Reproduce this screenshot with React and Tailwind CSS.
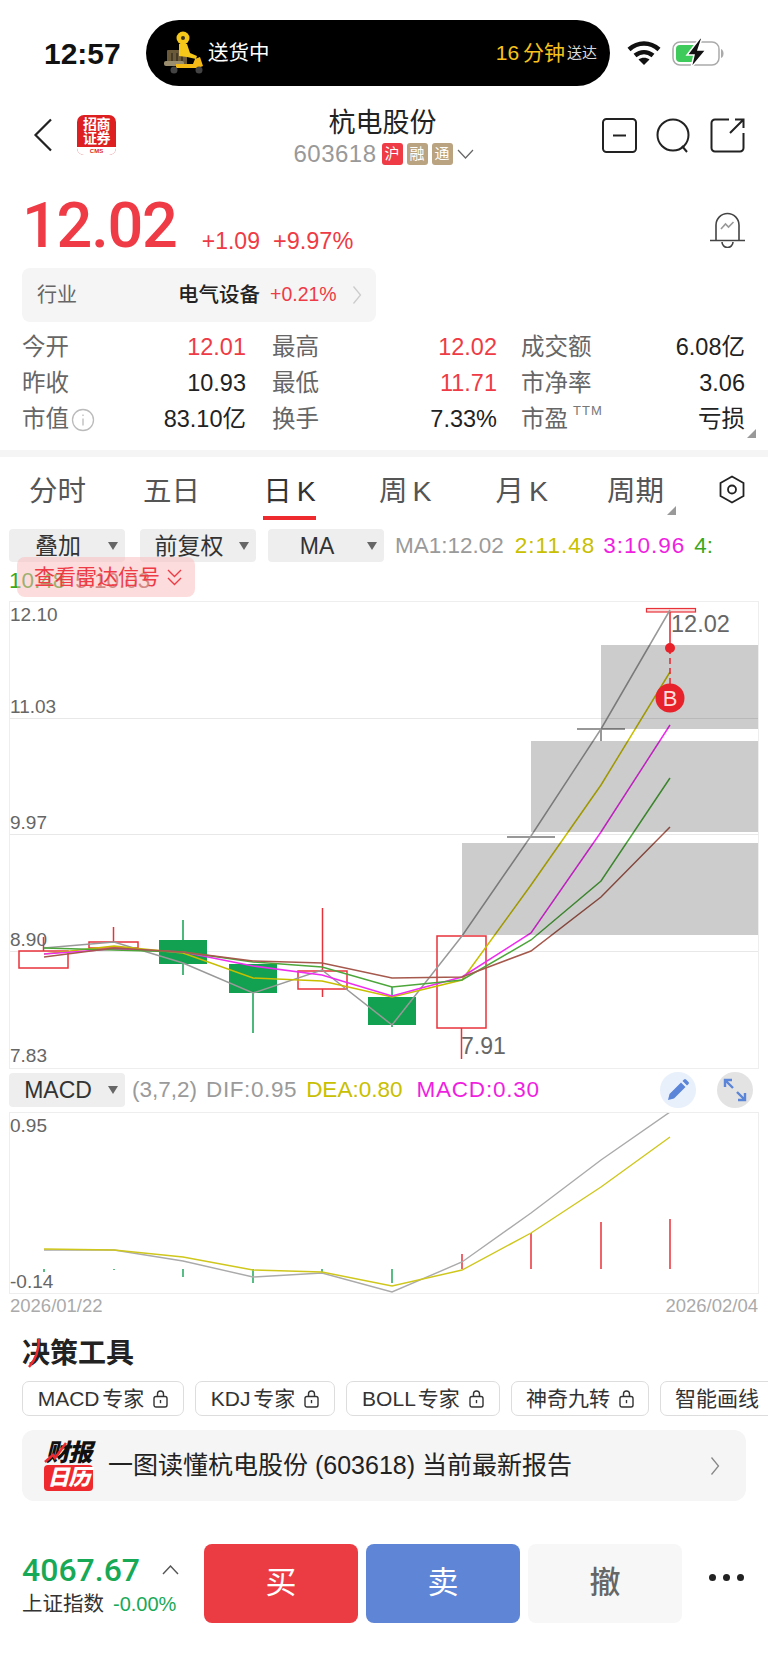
import React from 'react';

const X = [44, 114, 183, 253, 322, 392, 462, 531, 601, 670];

const toPoints = (ys) => ys.map((y, i) => `${X[i]},${y}`).join(' ');

const MA_LINES = [
  { color: '#999999', ys: [948, 942, 963, 993, 970, 1025, 936, 836, 729, 610] },
  { color: '#C8BE00', ys: [954, 946, 953, 978, 981, 997, 980, 885, 785, 672] },
  { color: '#EE2BEE', ys: [954, 949, 952, 966, 975, 996, 977, 933, 832, 725] },
  { color: '#4CA63A', ys: [948, 950, 952, 962, 967, 987, 980, 940, 881, 778] },
  { color: '#A5594C', ys: [957, 948, 952, 961, 963, 978, 977, 951, 897, 827] },
];

const CANDLES = [
  { up: true, x: 19, w: 49, top: 951, bottom: 968, hi: 937, lo: 968 },
  { up: true, x: 89, w: 49, top: 942, bottom: 948, hi: 927, lo: 948 },
  { up: false, x: 159, w: 48, top: 940, bottom: 964, hi: 920, lo: 975 },
  { up: false, x: 229, w: 48, top: 964, bottom: 993, hi: 964, lo: 1033 },
  { up: true, x: 298, w: 49, top: 971, bottom: 989, hi: 908, lo: 997 },
  { up: false, x: 368, w: 48, top: 997, bottom: 1025, hi: 987, lo: 1027 },
  { up: true, x: 437, w: 49, top: 936, bottom: 1028, hi: 936, lo: 1059 },
];

const MACD_BARS = [
  [1269, 1272, '#12A150'], [1269, 1270, '#12A150'], [1269, 1277, '#12A150'], [1269, 1283, '#12A150'], [1269, 1272, '#12A150'],
  [1269, 1283, '#12A150'], [1254, 1269, '#E8222A'], [1233, 1269, '#E8222A'], [1222, 1269, '#E8222A'], [1219, 1269, '#E8222A'],
];

const STATS = [
  ['今开', '12.01', true, '最高', '12.02', true, '成交额', '6.08亿', false],
  ['昨收', '10.93', false, '最低', '11.71', true, '市净率', '3.06', false],
  ['市值', '83.10亿', false, '换手', '7.33%', false, '市盈', '亏损', false],
];

const TOOLS = [
  ['MACD 专家', 'w-[162px]'],
  ['KDJ 专家', 'w-[140px]'],
  ['BOLL 专家', 'w-[154px]'],
  ['神奇九转', 'w-[138px]'],
  ['智能画线', 'w-[138px]'],
];

const Caret = () => (
  <span className="w-0 h-0 border-x-[5px] border-x-transparent border-t-[8px] border-t-[#666666]" />
);

const Select = ({ label, className }) => (
  <div className={`h-[33px] bg-[#EEEEEE] rounded-[4px] flex items-center shrink-0 relative ${className}`}>
    <span className="text-[23px] text-[#333333] w-full text-center pr-[18px]">{label}</span>
    <span className="absolute right-[7px] top-[13px] flex"><Caret /></span>
  </div>
);

const Chevron = ({ className, color = '#BBBBBB' }) => (
  <svg className={className} viewBox="0 0 10 20" fill="none" stroke={color} strokeWidth="1.3">
    <path d="M1.5 1.5 8.5 10 1.5 18.5" />
  </svg>
);

const LockIcon = () => (
  <svg className="w-[15px] h-[18px] shrink-0" viewBox="0 0 15 18" fill="none" stroke="#333333" strokeWidth="1.4">
    <rect x="1" y="6.5" width="13" height="10.5" rx="2" />
    <path d="M4.5 6.5V4a3 3 0 0 1 6 0v2.500" />
    <path d="M7.500 10v3.200" />
  </svg>
);

const Rider = () => (
  <svg className="w-[42px] h-[44px] shrink-0" viewBox="0 0 42 44">
    <rect x="3" y="19" width="20" height="15" rx="1" fill="#6B5A3A" />
    <path d="M8 22v8M13 22v8M18 22v8" stroke="#3A3020" strokeWidth="1.500" />
    <rect x="0" y="30" width="20" height="5" rx="2" fill="#9A8E6E" />
    <circle cx="19" cy="7" r="6.500" fill="#F5C71A" />
    <circle cx="19" cy="7" r="2" fill="#3A3020" />
    <path d="M15 13h8l3 9 7 3-1 3-9-2-8-1z" fill="#F5C71A" />
    <path d="M12 37h22l5-2-3-9-5 2-2 5H12z" fill="#F5B915" />
    <circle cx="10" cy="39" r="3.500" fill="#444444" />
    <circle cx="35" cy="39" r="3.500" fill="#444444" />
  </svg>
);

const KChart = () => (
  <svg className="block w-full h-full" viewBox="10 602 748 466">
    {[718, 834, 951].map((y) => (
      <line key={y} x1="10" x2="758" y1={y + 0.5} y2={y + 0.5} stroke="#000000" strokeOpacity="0.09" />
    ))}
    {CANDLES.map((c) => {
      const color = c.up ? '#E8323A' : '#12A150';
      const mid = c.x + c.w / 2;
      return (
        <g key={c.x}>
          <line x1={mid} x2={mid} y1={c.hi} y2={c.top} stroke={color} strokeWidth="1.500" />
          <line x1={mid} x2={mid} y1={c.bottom} y2={c.lo} stroke={color} strokeWidth="1.500" />
          {c.up ? (
            <rect x={c.x} y={c.top} width={c.w} height={c.bottom - c.top} fill="none" stroke={color} strokeWidth="1.500" />
          ) : (
            <rect x={c.x} y={c.top} width={c.w} height={c.bottom - c.top} fill={color} />
          )}
        </g>
      );
    })}
    {/* flat doji days */}
    <path d="M507 837h48M577 729h48M601 729v12" stroke="#777777" strokeWidth="1.500" fill="none" />
    <rect x="646.500" y="608.500" width="49" height="3.500" fill="#FBDCDC" stroke="#E8323A" strokeWidth="1.200" />
    <line x1="670" x2="670" y1="612" y2="648" stroke="#E8222A" strokeWidth="1.500" />
    {MA_LINES.map((l) => (
      <polyline key={l.color} points={toPoints(l.ys)} fill="none" stroke={l.color} strokeWidth="1.500" />
    ))}
    {/* translucent zones sit on top of the averages and darken them */}
    <rect x="601" y="645" width="158" height="84" fill="#000000" fillOpacity="0.2" />
    <rect x="531" y="741" width="228" height="91" fill="#000000" fillOpacity="0.2" />
    <rect x="462" y="843" width="297" height="92" fill="#000000" fillOpacity="0.2" />
    <line x1="670" x2="670" y1="648" y2="690" stroke="#E8222A" strokeWidth="1.500" strokeDasharray="6 4" />
    <circle cx="670" cy="648" r="5" fill="#E8222A" />
    <circle cx="670" cy="698" r="14.500" fill="#E8222A" />
    <text x="670" y="706" textAnchor="middle" className="text-[22px]" fill="#FFDDDD">B</text>
    {[['12.10', 621], ['11.03', 713], ['9.97', 829], ['8.90', 946], ['7.83', 1062]].map(([t, y]) => (
      <text key={t} x="10" y={y} className="text-[19px]" fill="#666666">{t}</text>
    ))}
    <text x="671" y="632" className="text-[23.500px]" fill="#666666">12.02</text>
    <text x="461" y="1054" className="text-[23px]" fill="#666666">7.91</text>
  </svg>
);

const MacdChart = () => (
  <svg className="block w-full h-full" viewBox="10 1113 748 180">
    {MACD_BARS.map(([a, b, color], i) => (
      <line key={X[i]} x1={X[i]} x2={X[i]} y1={a} y2={b} stroke={color} strokeWidth="1.400" />
    ))}
    <polyline points={toPoints([1250, 1250, 1261, 1277, 1273, 1292, 1262, 1213, 1160, 1112])} fill="none" stroke="#AAAAAA" strokeWidth="1.400" />
    <polyline points={toPoints([1249, 1250, 1257, 1270, 1272, 1286, 1270, 1233, 1187, 1137])} fill="none" stroke="#CFC71C" strokeWidth="1.400" />
    <text x="10" y="1132" className="text-[19px]" fill="#666666">0.95</text>
    <text x="10" y="1288" className="text-[19px]" fill="#666666">-0.14</text>
  </svg>
);

export default function App() {
  return (
    <div className="w-[768px] h-[1665px] bg-white overflow-hidden flex flex-col font-['Liberation_Sans','Noto_Sans_CJK_SC',sans-serif] text-[#222222]">
      {/* status bar with the delivery pill */}
      <div className="mt-[20px] h-[66px] flex items-center shrink-0">
        <span className="ml-[44px] w-[102px] text-[30px] font-bold text-[#111111]">12:57</span>
        <div className="w-[464px] h-[66px] bg-black rounded-full flex items-center pl-[18px] pr-[13px] text-white">
          <Rider />
          <span className="ml-[2px] text-[20.500px]">送货中</span>
          <span className="ml-auto text-[21px] text-[#F8C21C] [word-spacing:-2px]">16 分钟</span>
          <span className="ml-[2px] text-[15px] text-[#D8D8D8]">送达</span>
        </div>
        <svg className="ml-[17px] w-[34px] h-[26px]" viewBox="0 0 34 26" fill="none" stroke="#111111" strokeWidth="4.500">
          <path d="M2 9.500c9-8 21-8 30 0" />
          <path d="M8 15.500c5.500-4.500 12.500-4.500 18 0" />
          <path d="M17 25l-5.500-5.500c3-2.500 8-2.500 11 0z" fill="#111111" stroke="none" />
        </svg>
        <svg className="ml-[11px] w-[53px] h-[30px]" viewBox="0 0 53 30">
          <rect x="1" y="4" width="46" height="23" rx="7" fill="none" stroke="#AAAAAA" strokeWidth="1.500" />
          <rect x="4" y="7" width="22" height="17" rx="4" fill="#3FCB5B" />
          <path d="M49 11c2 1 2.500 2.500 2.500 4.500S51 19 49 20z" fill="#AAAAAA" />
          <path d="M28 0 15 17h7l-3 13 15-18h-8l4-12z" fill="#111111" stroke="#FFFFFF" strokeWidth="1.500" />
        </svg>
      </div>

      {/* stock title bar */}
      <div className="mt-[24px] h-[56px] pb-[6px] flex items-center relative shrink-0">
        <svg className="ml-[33px] w-[20px] h-[34px]" viewBox="0 0 20 34" fill="none" stroke="#222222" strokeWidth="2.200">
          <path d="M18 1.500 2.500 17 18 32.500" />
        </svg>
        <div className="ml-[24px] w-[39px] h-[40px] rounded-[7px] bg-[#DD1F22] overflow-hidden flex flex-col items-center">
          <span className="mt-[2px] text-[14px] leading-[14px] font-bold text-white tracking-[-0.500px] text-center w-[30px]">招商证券</span>
          <span className="mt-auto w-full h-[8px] bg-white text-[6px] leading-[8px] text-center text-[#DD1F22] font-bold">CMS</span>
        </div>
        <div className="absolute left-0 right-0 top-[-7px] flex flex-col items-center">
          <span className="ml-[-3px] text-[27px] leading-[40px] text-[#222222]">杭电股份</span>
          <div className="ml-[-1px] flex items-center h-[22px]">
            <span className="text-[24px] text-[#999999] tracking-[0.500px]">603618</span>
            <span className="ml-[5px] w-[21px] h-[22px] rounded-[3px] bg-[#EE3B45] text-white text-[15px] leading-[22px] text-center">沪</span>
            <span className="ml-[4px] w-[21px] h-[22px] rounded-[3px] bg-[#BAA380] text-white text-[15px] leading-[22px] text-center">融</span>
            <span className="ml-[4px] w-[21px] h-[22px] rounded-[3px] bg-[#BAA380] text-white text-[15px] leading-[22px] text-center">通</span>
            <svg className="ml-[4px] w-[17px] h-[10px]" viewBox="0 0 17 10" fill="none" stroke="#666666" strokeWidth="1.200">
              <path d="M1 1l7.500 8L16 1" />
            </svg>
          </div>
        </div>
        <div className="ml-auto mr-[23px] flex items-center gap-[19px]">
          <svg className="w-[35px] h-[35px]" viewBox="0 0 35 35" fill="none" stroke="#222222" strokeWidth="2">
            <rect x="1" y="1" width="33" height="33" rx="3.500" />
            <path d="M11 17.500h13" />
          </svg>
          <svg className="w-[35px] h-[35px]" viewBox="0 0 35 35" fill="none" stroke="#222222" strokeWidth="2">
            <circle cx="17" cy="17" r="15.500" />
            <path d="M26 28l5 6" />
          </svg>
          <svg className="w-[35px] h-[35px]" viewBox="0 0 35 35" fill="none" stroke="#222222" strokeWidth="2">
            <path d="M19 1.500H5A3.500 3.500 0 0 0 1.500 5v25A3.500 3.500 0 0 0 5 33.500h25a3.500 3.500 0 0 0 3.500-3.500V15" />
            <path d="M20 15 33.500 1.500M25 1.500h8.500V10" />
          </svg>
        </div>
      </div>

      {/* last price */}
      <div className="h-[102px] shrink-0 flex items-start relative">
        <span className="ml-[22px] mt-[28px] text-[63px] leading-[64px] font-medium font-['Roboto','Liberation_Sans',sans-serif] text-[#EE3B45] tracking-[-1.200px]">12.02</span>
        <span className="ml-[25px] mt-[61px] text-[23px] leading-[28px] text-[#EE3B45]">+1.09</span>
        <span className="ml-[13px] mt-[61px] text-[23.500px] leading-[28px] text-[#EE3B45]">+9.97%</span>
        <svg className="ml-auto mr-[22px] mt-[44px] w-[37px] h-[38px]" viewBox="0 0 37 38" fill="none" stroke="#444444" strokeWidth="1.600">
          <path d="M7 30V15a11.500 11.500 0 0 1 23 0v15" />
          <path d="M1 30.500h35" />
          <path d="M13 32a5.500 5.500 0 0 0 11 0" />
          <path d="M12 19l4.500-5 3 3 5-5" stroke="#999999" />
        </svg>
      </div>

      {/* industry strip */}
      <div className="ml-[22px] w-[354px] h-[54px] bg-[#F5F5F5] rounded-[8px] flex items-center shrink-0">
        <span className="ml-[15px] text-[20px] text-[#666666]">行业</span>
        <span className="ml-[101px] text-[20.500px] font-medium text-[#222222]">电气设备</span>
        <span className="ml-[10px] text-[19.500px] text-[#EE3B45]">+0.21%</span>
        <Chevron className="ml-[15px] w-[10px] h-[20px]" color="#CCCCCC" />
      </div>

      {/* quote fields */}
      <div className="mt-[8px] flex flex-col relative shrink-0">
        {STATS.map((row, r) => (
          <div key={row[0]} className="h-[36px] flex items-center text-[23.500px] whitespace-nowrap">
            <span className="ml-[22px] w-[76px] shrink-0 text-[#666666] flex items-center">
              {row[0]}
              {r === 2 && (
                <svg className="ml-[2px] w-[24px] h-[24px] shrink-0" viewBox="0 0 24 24" fill="none" stroke="#BBBBBB" strokeWidth="1.300">
                  <circle cx="12" cy="12" r="10.500" />
                  <path d="M12 10.500v7M12 6.500v1.500" />
                </svg>
              )}
            </span>
            <span className={`w-[148px] shrink-0 text-right ${row[2] ? 'text-[#EE3B45]' : 'text-[#222222]'}`}>{row[1]}</span>
            <span className="ml-[26px] w-[64px] shrink-0 text-[#666666]">{row[3]}</span>
            <span className={`w-[161px] shrink-0 text-right ${row[5] ? 'text-[#EE3B45]' : 'text-[#222222]'}`}>{row[4]}</span>
            <span className="ml-[24px] w-[84px] shrink-0 text-[#666666] flex">
              {row[6]}
              {r === 2 && <span className="ml-[5px] text-[13px] leading-[18px] text-[#777777] tracking-[1px]">TTM</span>}
            </span>
            <span className="w-[140px] shrink-0 text-right text-[#222222]">{row[7]}</span>
          </div>
        ))}
        <span className="absolute left-[747px] top-[99px] w-0 h-0 border-l-[9px] border-l-transparent border-b-[9px] border-b-[#999999]" />
      </div>

      <div className="mt-[12px] h-[7px] bg-[#F5F5F5] shrink-0" />

      {/* period tabs */}
      <div className="h-[63px] relative flex items-start text-[28.500px] text-[#555555] [word-spacing:-3px] shrink-0">
        <span className="ml-[29px] mt-[15px] leading-[38px]">分时</span>
        <span className="ml-[57px] mt-[15px] leading-[38px]">五日</span>
        <div className="ml-[63px] mt-[15px] flex flex-col items-center relative">
          <span className="leading-[38px] text-[#333333]">日 K</span>
          <span className="mt-[6px] w-[53px] h-[4px] bg-[#EE2A2E]" />
        </div>
        <span className="ml-[63px] mt-[15px] leading-[38px]">周 K</span>
        <span className="ml-[64px] mt-[15px] leading-[38px]">月 K</span>
        <span className="ml-[59px] mt-[15px] leading-[38px]">周期</span>
        <span className="absolute left-[667px] top-[49px] w-0 h-0 border-l-[9px] border-l-transparent border-b-[9px] border-b-[#999999]" />
        <svg className="absolute left-[719px] top-[18px] w-[26px] h-[29px]" viewBox="0 0 26 29" fill="none" stroke="#222222" strokeWidth="1.800">
          <path d="M13 1.500 24.500 8v13L13 27.500 1.500 21V8z" />
          <circle cx="13" cy="14.500" r="4" />
        </svg>
      </div>

      {/* indicator selectors, MA values wrap to a second line */}
      <div className="mt-[9px] h-[72px] relative shrink-0 text-[22.500px]">
        <div className="flex items-center">
          <Select label="叠加" className="ml-[9px] w-[116px]" />
          <Select label="前复权" className="ml-[15px] w-[116px]" />
          <Select label="MA" className="ml-[12px] w-[116px]" />
          <span className="ml-[11px] text-[#9A9A9A] whitespace-nowrap">MA1:12.02</span>
          <span className="ml-[11px] text-[#C8C000] whitespace-nowrap tracking-[1px]">2:11.48</span>
          <span className="ml-[8px] text-[#F01FE0] whitespace-nowrap tracking-[1px]">3:10.96</span>
          <span className="ml-[9px] text-[#3AA71E] whitespace-nowrap">4:</span>
        </div>
        <div className="ml-[9px] mt-[5px] flex leading-[26px]">
          <span className="text-[#3AA71E]">10.48</span>
          <span className="ml-[10px] text-[#A5594C]">5:10.03</span>
        </div>
        <div className="absolute left-[17px] top-[28px] w-[178px] h-[40px] rounded-[8px] bg-[#FBB9BC]/50 flex items-center pl-[17px]">
          <span className="text-[21px] text-[#EE3B45]">查看雷达信号</span>
          <svg className="ml-[7px] w-[15px] h-[17px]" viewBox="0 0 15 17" fill="none" stroke="#EE3B45" strokeWidth="1.400">
            <path d="M1 1l6.500 6.500L14 1M1 9l6.500 6.500L14 9" />
          </svg>
        </div>
      </div>

      <div className="ml-[9px] w-[750px] h-[468px] border border-[#EEEEEE] shrink-0">
        <KChart />
      </div>

      {/* MACD header */}
      <div className="mt-[4px] h-[34px] flex items-center shrink-0 text-[22.500px] relative">
        <Select label="MACD" className="ml-[9px] w-[116px] !h-[34px]" />
        <span className="ml-[7px] text-[#9A9A9A] whitespace-nowrap">(3,7,2)</span>
        <span className="ml-[9px] text-[#9A9A9A] whitespace-nowrap tracking-[0.600px]">DIF:0.95</span>
        <span className="ml-[9px] text-[#C8C000] whitespace-nowrap">DEA:0.80</span>
        <span className="ml-[14px] text-[#F01FE0] whitespace-nowrap tracking-[0.800px]">MACD:0.30</span>
        <div className="ml-auto mr-[15px] flex items-center gap-[21px]">
          <div className="w-[36px] h-[36px] rounded-full bg-[#E8F0FB] flex items-center justify-center">
            <svg className="w-[22px] h-[22px]" viewBox="0 0 22 22" fill="#5B85D8">
              <path d="M1 21l1.500-6L14 3.500l4.500 4.500L7 19.500zM15.500 2 17 .5a1.500 1.500 0 0 1 2 0l2.500 2.500a1.500 1.500 0 0 1 0 2L20 6.500z" />
            </svg>
          </div>
          <div className="w-[36px] h-[36px] rounded-full bg-[#E3E3E3] flex items-center justify-center">
            <svg className="w-[26px] h-[26px]" viewBox="0 0 26 26" fill="none" stroke="#5B85D8" strokeWidth="2.400">
              <path d="M3 10V3h7M3 3l8 8M23 16v7h-7M23 23l-8-8" />
            </svg>
          </div>
        </div>
      </div>

      <div className="mt-[5px] ml-[9px] w-[750px] h-[182px] border border-[#EEEEEE] shrink-0">
        <MacdChart />
      </div>

      <div className="mt-[1px] h-[22px] px-[10px] flex justify-between items-center text-[18.500px] leading-[22px] text-[#AAAAAA] shrink-0">
        <span>2026/01/22</span>
        <span>2026/02/04</span>
      </div>

      {/* decision tools */}
      <div className="mt-[20px] ml-[22px] h-[34px] relative shrink-0">
        <span className="text-[28px] leading-[34px] font-bold text-[#222222]">决策工具</span>
        <svg className="absolute left-[4px] top-[1px] w-[18px] h-[30px]" viewBox="0 0 18 30" fill="none" stroke="#EE2A2E" strokeWidth="2.500">
          <path d="M13 1c0 12-3 20-10 28" />
        </svg>
      </div>

      <div className="mt-[10px] ml-[22px] flex gap-[11px] overflow-hidden shrink-0">
        {TOOLS.map(([name, w]) => (
          <div key={name} className={`${w} h-[35px] shrink-0 rounded-[7px] border border-[#DDDDDD] flex items-center justify-center gap-[9px] text-[21px] text-[#333333] [word-spacing:-3px]`}>
            <span className="whitespace-nowrap">{name}</span>
            <LockIcon />
          </div>
        ))}
      </div>

      {/* earnings calendar banner */}
      <div className="mt-[14px] ml-[22px] w-[724px] h-[71px] rounded-[12px] bg-[#F5F5F5] flex items-center shrink-0">
        <div className="ml-[22px] w-[49px] flex flex-col items-center relative">
          <span className="text-[24px] leading-[25px] font-black italic text-[#111111] tracking-[-1px] whitespace-nowrap">财报</span>
          <span className="w-[49px] h-[26px] rounded-[4px] bg-[#EE2A2E] text-[22px] leading-[26px] font-black italic text-white text-center tracking-[-1px]">日历</span>
          <svg className="absolute left-[0px] top-[2px] w-[24px] h-[22px]" viewBox="0 0 24 22" fill="none" stroke="#EE2A2E" strokeWidth="2.500">
            <path d="M1 20 9 13l2 3L22 1" />
          </svg>
        </div>
        <span className="ml-[15px] text-[25px] text-[#222222] whitespace-nowrap">一图读懂杭电股份 (603618) 当前最新报告</span>
        <Chevron className="ml-auto mr-[26px] w-[10px] h-[22px]" color="#888888" />
      </div>

      {/* bottom trade bar */}
      <div className="mt-[43px] h-[79px] flex shrink-0">
        <div className="ml-[22px] w-[182px] flex flex-col">
          <div className="flex items-center mt-[8px]">
            <span className="text-[32px] leading-[36px] font-medium font-['Roboto','Liberation_Sans',sans-serif] text-[#18A957]">4067.67</span>
            <svg className="ml-[22px] w-[17px] h-[10px]" viewBox="0 0 17 10" fill="none" stroke="#555555" strokeWidth="1.400">
              <path d="M1 9l7.500-8L16 9" />
            </svg>
          </div>
          <div className="flex items-center mt-[2px]">
            <span className="text-[20.500px] leading-[28px] text-[#333333]">上证指数</span>
            <span className="ml-[9px] text-[20px] leading-[28px] text-[#18A957]">-0.00%</span>
          </div>
        </div>
        <div className="flex gap-[8px]">
          <div className="w-[154px] h-[79px] rounded-[8px] bg-[#EC3C43] flex items-center justify-center text-[31px] text-white">买</div>
          <div className="w-[154px] h-[79px] rounded-[8px] bg-[#5F86D6] flex items-center justify-center text-[31px] text-white">卖</div>
          <div className="w-[154px] h-[79px] rounded-[8px] bg-[#F7F7F7] flex items-center justify-center text-[31px] text-[#666666] font-medium">撤</div>
        </div>
        <div className="ml-[27px] flex items-center gap-[7px] h-[66px]">
          <span className="w-[7px] h-[7px] rounded-full bg-[#222222]" />
          <span className="w-[7px] h-[7px] rounded-full bg-[#222222]" />
          <span className="w-[7px] h-[7px] rounded-full bg-[#222222]" />
        </div>
      </div>
    </div>
  );
}
